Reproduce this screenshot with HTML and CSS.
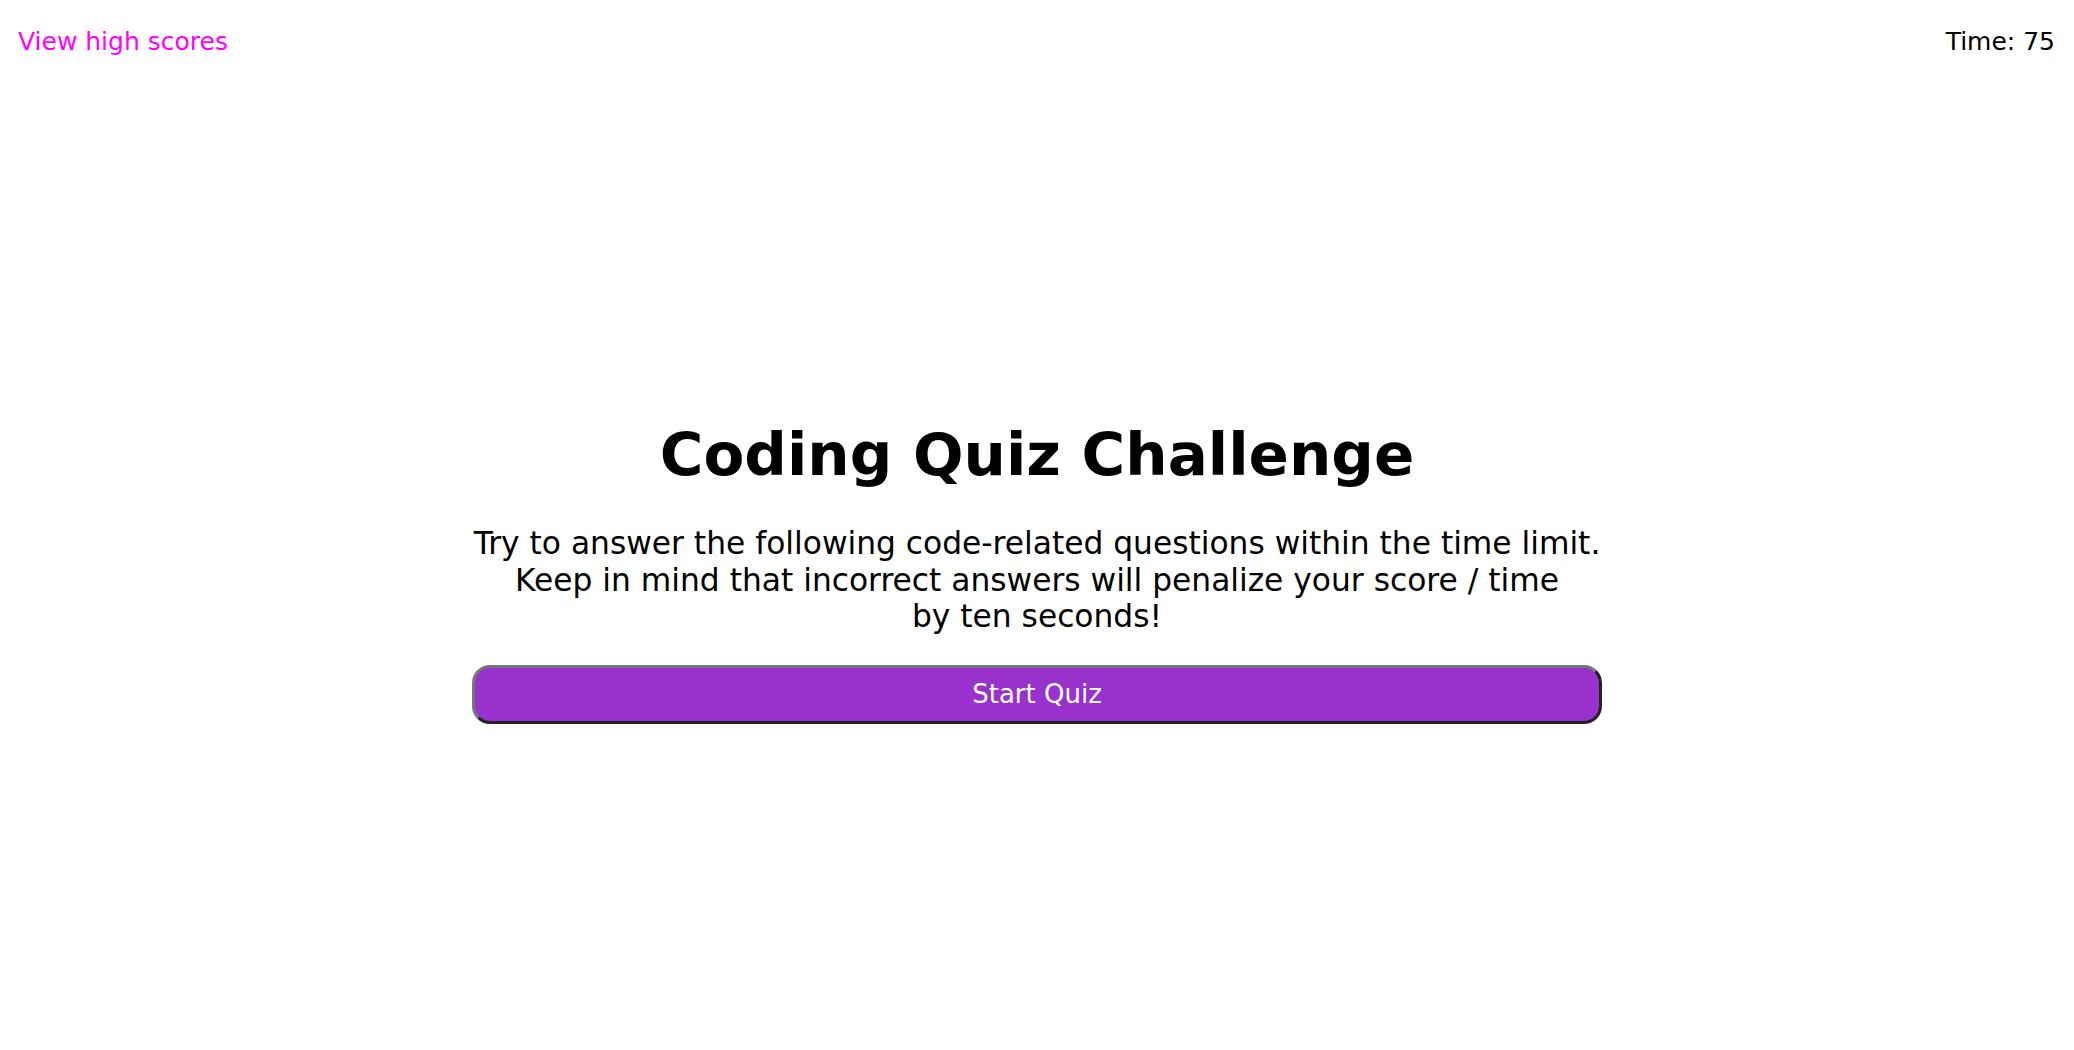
FILE: index.html
```html
<!DOCTYPE html>
<html lang="en">
<head>
<meta charset="utf-8">
<title>Coding Quiz Challenge</title>
<link rel="stylesheet" href="styles.css">
</head>
<body>
<header class="top-bar">
  <a class="scores-link" href="#">View high scores</a>
  <div class="timer">Time: <span>75</span></div>
</header>
<main class="quiz">
  <h1 class="quiz-title">Coding Quiz Challenge</h1>
  <p class="quiz-intro">Try to answer the following code-related questions within the time limit.<br>Keep in mind that incorrect answers will penalize your score / time<br>by ten seconds!</p>
  <button class="start-btn" type="button">Start Quiz</button>
</main>
</body>
</html>
```
FILE: styles.css
```css
html, body {
  margin: 0;
  padding: 0;
  background: #ffffff;
}

body {
  font-family: "DejaVu Sans", "Verdana", sans-serif;
  color: #000000;
}

.top-bar {
  display: flex;
  justify-content: space-between;
  align-items: flex-start;
  padding: 27px 19px 0 18px;
  font-size: 25px;
  line-height: 29px;
}

.scores-link {
  color: #ff00ff;
  text-decoration: none;
}

.timer {
  color: #000000;
}

.quiz {
  width: 1130px;
  margin: 364px auto 0;
  display: flex;
  flex-direction: column;
  align-items: stretch;
  text-align: center;
}

.quiz-title {
  margin: 0;
  font-size: 59.5px;
  line-height: 70px;
  font-weight: bold;
}

.quiz-intro {
  margin: 35px 0 0;
  font-size: 31.3px;
  line-height: 36.5px;
  white-space: nowrap;
}

.start-btn {
  margin-top: 30px;
  height: 59px;
  box-sizing: border-box;
  border-width: 3px;
  border-style: solid;
  border-color: #767676 #222222 #222222 #767676;
  border-radius: 18px;
  background: #9932cc;
  color: #ffffff;
  font-family: "DejaVu Sans", "Verdana", sans-serif;
  font-size: 26px;
  padding: 0;
  cursor: pointer;
}
```
